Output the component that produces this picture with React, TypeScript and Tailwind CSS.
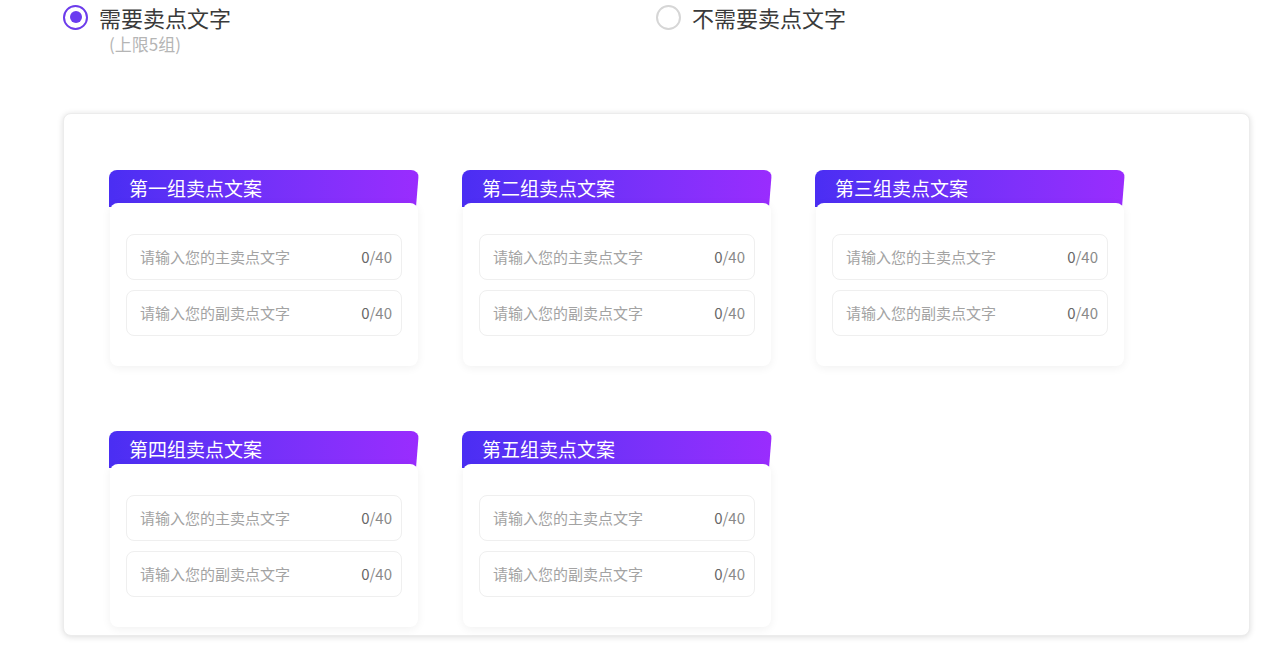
import React from "react";

const groups = ["第一组卖点文案", "第二组卖点文案", "第三组卖点文案", "第四组卖点文案", "第五组卖点文案"];

function Field({ placeholder }: { placeholder: string }) {
  return (
    <div className="flex h-[46px] items-center justify-between rounded-[8px] border border-[#efefef] bg-white pl-[13px] pr-[9px]">
      <span className="text-[15px] text-[#a3a3a3]">{placeholder}</span>
      <span className="text-[15px] text-[#8a8a8a]">
        <span className="text-[#666]">0</span>/40
      </span>
    </div>
  );
}

function GroupCard({ title }: { title: string }) {
  return (
    <div className="flex w-[309px] flex-col">
      <div className="ml-[-1px] h-[37px] rounded-t-[8px] bg-gradient-to-r from-[#4a2ef3] to-[#9a2cfe] pl-[20px] pt-[5px] text-[19px] leading-[26px] text-white [clip-path:polygon(0_0,100%_0,calc(100%-3px)_100%,0_100%)]">
        {title}
      </div>
      <div className="relative mt-[-4px] flex w-[308px] flex-col gap-[10px] rounded-[8px] bg-white px-[16px] pb-[30px] pt-[31px] shadow-[0_2px_10px_rgba(0,0,0,0.06)]">
        <Field placeholder="请输入您的主卖点文字" />
        <Field placeholder="请输入您的副卖点文字" />
      </div>
    </div>
  );
}

export default function App() {
  return (
    <div className="h-[658px] w-[1280px] bg-white font-['Noto_Sans_CJK_SC','Noto_Sans',sans-serif]">
      <div className="flex h-[57px] pl-[63px] pt-[4px]">
        <div className="w-[593px]">
          <div className="flex items-center gap-[11px]">
            <div className="flex h-[25px] w-[25px] items-center justify-center rounded-full border-[2px] border-[#6c3ceb]">
              <div className="h-[12px] w-[12px] rounded-full bg-[#6a3cf0]" />
            </div>
            <span className="text-[22px] leading-[26px] text-[#3a3a3a]">需要卖点文字</span>
          </div>
          <div className="ml-[46px] mt-[3px] text-[17px] leading-[22px] text-[#b5b5b5]">(上限5组)</div>
        </div>
        <div className="flex items-start">
          <div className="flex items-center gap-[11px]">
            <div className="h-[25px] w-[25px] rounded-full border-[2px] border-[#d6d6d6]" />
            <span className="text-[22px] leading-[26px] text-[#3a3a3a]">不需要卖点文字</span>
          </div>
        </div>
      </div>

      <div className="ml-[63px] mt-[56px] h-[523px] w-[1187px] rounded-[8px] border border-[#ececec] bg-white pl-[46px] pt-[56px] shadow-[0_1px_6px_rgba(0,0,0,0.14)]">
        <div className="grid grid-cols-[309px_309px_309px] gap-x-[44px] gap-y-[65px]">
          {groups.map((g) => (
            <GroupCard key={g} title={g} />
          ))}
        </div>
      </div>
    </div>
  );
}
